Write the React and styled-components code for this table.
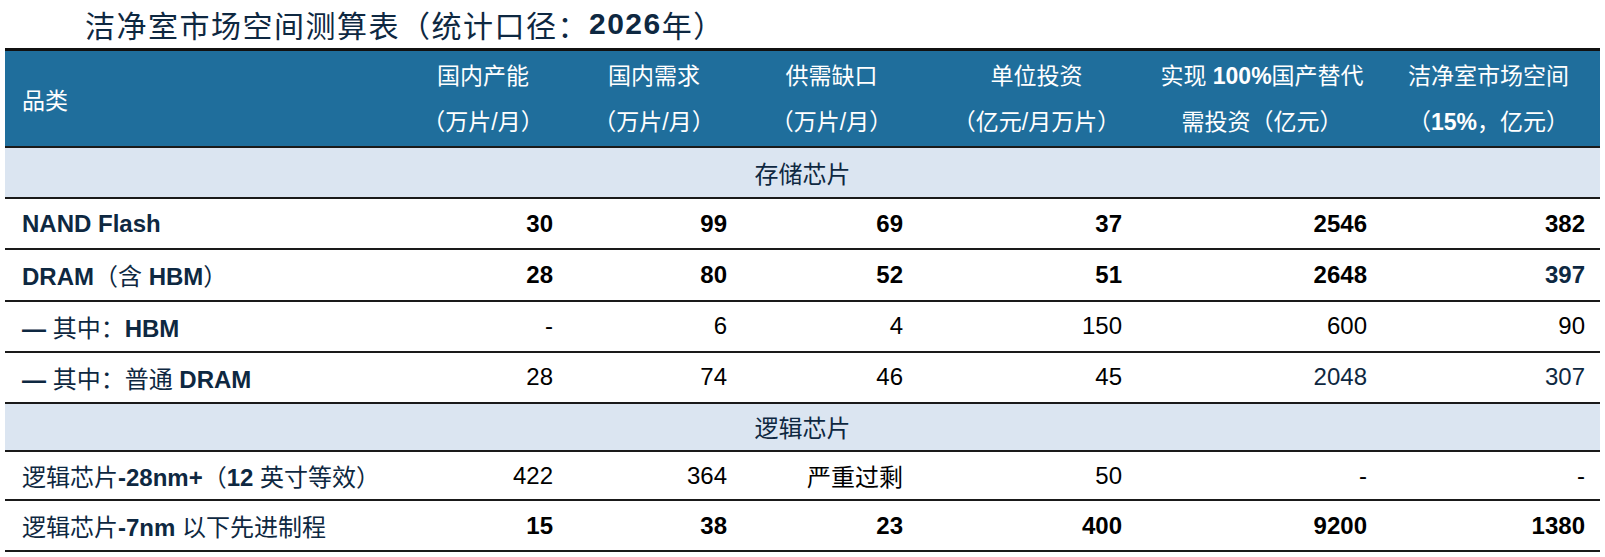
import * as React from "react";
import styled, { createGlobalStyle } from "styled-components";

const NAVY = "#0E2841";
const COLS = [
    { w: 176, pr: 18 },
    { w: 166, pr: 10 },
    { w: 189, pr: 23 },
    { w: 221, pr: 25 },
    { w: 230, pr: 10 },
    { w: 223, pr: 15 },
];
const TEMPLATE = `390px ${COLS.map((c) => c.w + "px").join(" ")}`;

const Global = createGlobalStyle`
    body {
        margin: 0;
        background: #fff;
        font-family: "Liberation Sans", "Noto Sans CJK SC", sans-serif;
    }
`;

const Page = styled.div`
    padding-left: 5px;
    width: 1595px;
`;

const Title = styled.div`
    height: 48px;
    display: flex;
    align-items: center;
    padding-left: 80px;
    font-size: 30px;
    color: ${NAVY};
    letter-spacing: 1.5px;
`;

const Table = styled.div`
    width: 1595px;
    border-top: 3px solid #111;
`;

const Head = styled.div`
    display: grid;
    grid-template-columns: ${TEMPLATE};
    height: 97px;
    box-sizing: border-box;
    background: #1F6E9C;
    border-bottom: 2px solid #1a1a1a;
    color: #fff;
    font-size: 23px;
`;

const HeadFirst = styled.div`
    display: flex;
    align-items: center;
    padding-left: 17px;
`;

const HeadCell = styled.div`
    display: flex;
    flex-direction: column;
    align-items: center;
    justify-content: center;
    line-height: 46px;
    white-space: nowrap;
`;

const Row = styled.div`
    display: grid;
    grid-template-columns: ${TEMPLATE};
    align-items: center;
    height: ${(p) => p.h || 51}px;
    box-sizing: border-box;
    border-bottom: 2px solid #1a1a1a;
    font-size: 24px;
`;

const Section = styled.div`
    display: flex;
    align-items: center;
    justify-content: center;
    height: ${(p) => p.h || 51}px;
    box-sizing: border-box;
    background: #DBE5F1;
    border-bottom: 2px solid #1a1a1a;
    font-size: 24px;
    color: ${NAVY};
`;

const Label = styled.div`
    padding-left: 17px;
    color: ${NAVY};
    white-space: nowrap;
`;

const Num = styled.div`
    text-align: right;
    padding-right: ${(p) => p.pr}px;
    font-weight: ${(p) => (p.bold ? 700 : 400)};
    color: ${(p) => (p.navy ? NAVY : "#000")};
    white-space: nowrap;
`;

const B = styled.b`
    font-weight: 700;
`;

const rows = [
    {
        label: <B>NAND Flash</B>,
        vals: ["30", "99", "69", "37", "2546", "382"],
        bold: true,
        h: 51.2,
    },
    {
        label: (
            <>
                <B>DRAM</B>（含 <B>HBM</B>）
            </>
        ),
        vals: ["28", "80", "52", "51", "2648", "397"],
        bold: true,
        navy: [5],
        h: 51.2,
    },
    {
        label: (
            <>
                <B>—</B> 其中：<B>HBM</B>
            </>
        ),
        vals: ["-", "6", "4", "150", "600", "90"],
        h: 51.2,
    },
    {
        label: (
            <>
                <B>—</B> 其中：普通 <B>DRAM</B>
            </>
        ),
        vals: ["28", "74", "46", "45", "2048", "307"],
        navy: [4, 5],
        h: 51.1,
    },
    { section: "逻辑芯片", h: 48.2 },
    {
        label: (
            <>
                逻辑芯片<B>-28nm+</B>（<B>12</B> 英寸等效）
            </>
        ),
        vals: ["422", "364", "严重过剩", "50", "-", "-"],
        h: 49.1,
    },
    {
        label: (
            <>
                逻辑芯片<B>-7nm</B> 以下先进制程
            </>
        ),
        vals: ["15", "38", "23", "400", "9200", "1380"],
        bold: true,
        h: 51.2,
    },
];

const heads = [
    ["国内产能", "（万片/月）"],
    ["国内需求", "（万片/月）"],
    ["供需缺口", "（万片/月）"],
    ["单位投资", "（亿元/月万片）"],
    [<>实现 <B>100%</B>国产替代</>, "需投资（亿元）"],
    ["洁净室市场空间", <>（<B>15%</B>，亿元）</>],
];

export default function App() {
    return (
        <Page>
            <Global />
            <Title>
                洁净室市场空间测算表（统计口径：<B>2026</B>年）
            </Title>
            <Table>
                <Head>
                    <HeadFirst>品类</HeadFirst>
                    {heads.map((h, i) => (
                        <HeadCell key={i}>
                            <span>{h[0]}</span>
                            <span>{h[1]}</span>
                        </HeadCell>
                    ))}
                </Head>
                <Section h={51.2}>存储芯片</Section>
                {rows.map((r, i) =>
                    r.section ? (
                        <Section key={i} h={r.h}>{r.section}</Section>
                    ) : (
                        <Row key={i} h={r.h}>
                            <Label>{r.label}</Label>
                            {r.vals.map((v, j) => (
                                <Num
                                    key={j}
                                    pr={COLS[j].pr}
                                    bold={r.bold}
                                    navy={r.navy && r.navy.includes(j)}
                                >
                                    {v}
                                </Num>
                            ))}
                        </Row>
                    )
                )}
            </Table>
        </Page>
    );
}
